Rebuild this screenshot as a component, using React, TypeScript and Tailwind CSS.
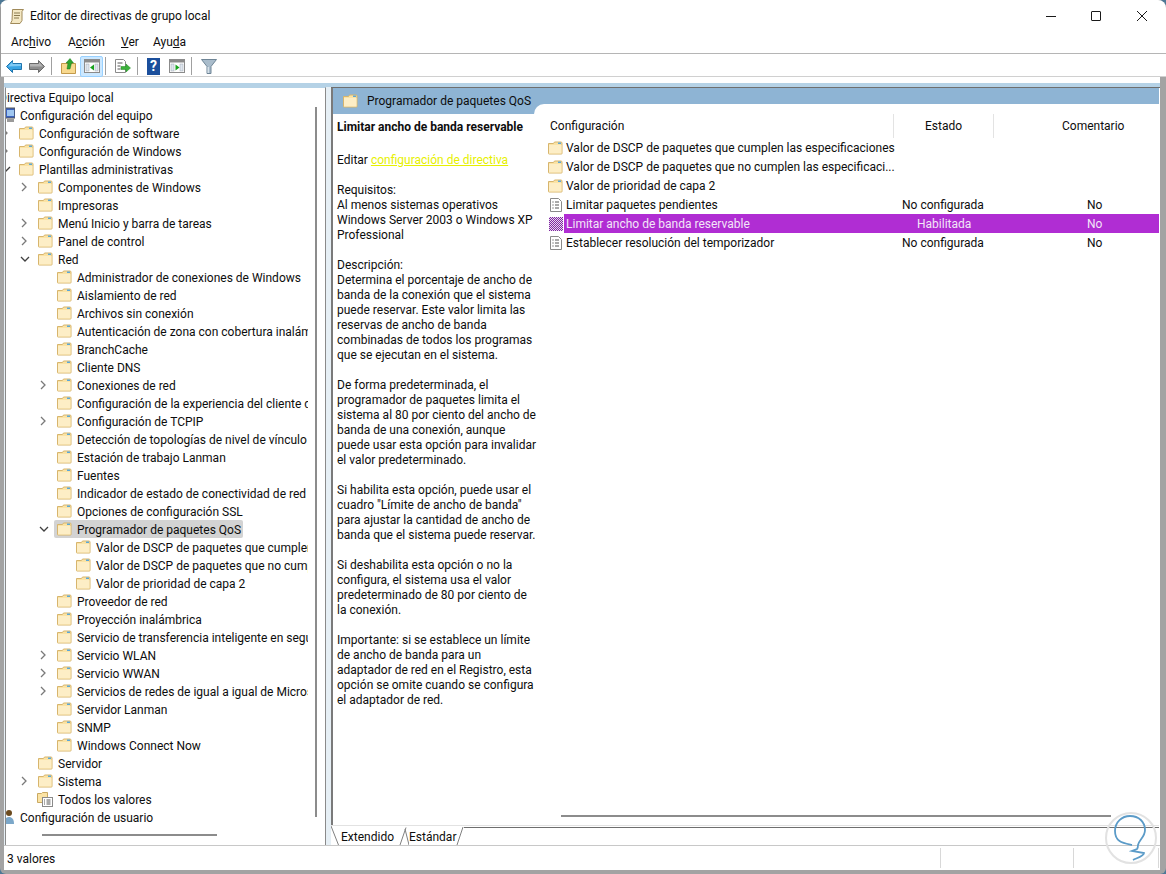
import React from "react";

const font = "[font-family:Roboto,'Liberation_Sans',sans-serif]";

const Folder = () => (
  <svg width="16" height="16" viewBox="0 0 16 16" className="shrink-0">
    <path d="M1.500 3.500h5l1-1.500h6.500a1 1 0 0 1 1 1v10.500a.5.5 0 0 1-.5.5H2a.5.5 0 0 1-.5-.5z" fill="#fbe3a4" stroke="#d7b56d" />
    <rect x="2" y="5" width="12.500" height="8.500" fill="#fdeec6" />
    <rect x="11" y="2.500" width="3" height="1.500" fill="#5aa7d8" />
  </svg>
);

const PolicyIcon = ({ active }: { active?: boolean }) => (
  <svg width="14" height="16" viewBox="0 0 14 16" className="shrink-0">
    <defs>
      <pattern id="dither" width="2" height="2" patternUnits="userSpaceOnUse">
        <rect width="2" height="2" fill="#e9d4f2" />
        <rect width="1" height="1" fill="#7d2a9e" />
        <rect x="1" y="1" width="1" height="1" fill="#7d2a9e" />
      </pattern>
    </defs>
    <path d="M1.500 1.500h8l3 3v10h-11z" fill="#fff" stroke="#8a8a8a" />
    <path d="M3.500 5h1M3.500 8h1M3.500 11h1" stroke="#333" />
    <path d="M6 5h4M6 8h4M6 11h4" stroke="#555" />
    {active && <rect x="0" y="1" width="14" height="14" fill="url(#dither)" />}
  </svg>
);

const WindowIcon = ({ play }: { play?: boolean }) => (
  <svg width="16" height="14" viewBox="0 0 16 14" className="shrink-0">
    <rect x="0.500" y="0.500" width="15" height="13" fill="#fff" stroke="#8b8b8b" />
    <rect x="1" y="1" width="14" height="2.500" fill="#8b8b8b" />
    <rect x="2" y="5" width="3" height="7" fill="#dfe6ee" stroke="#9aa5b1" strokeWidth="0.500" />
    <rect x="11" y="5" width="3" height="7" fill="#dfe6ee" stroke="#9aa5b1" strokeWidth="0.500" />
    <path d={play ? "M6.500 5.500l4 3-4 3z" : "M10 5.500l-4 3 4 3z"} fill="#19a31e" />
  </svg>
);

const Sep = ({ className }: { className: string }) => <div className={`h-[18px] w-px bg-[#a0a0a0] ${className}`} />;

const Toolbar = () => (
  <div className="flex h-[22px] items-center bg-white pl-[5px] pt-[2px]">
    <svg width="16" height="13" viewBox="0 0 16 13" className="shrink-0">
      <path d="M6.500.5L.5 6.500l6 6V9.500h9v-6h-9z" fill="#38a3e3" stroke="#1f74ad" />
      <path d="M2 6.500l4.500-4.500v2h8.500v2z" fill="#7fcaf5" />
    </svg>
    <svg width="16" height="13" viewBox="0 0 16 13" className="ml-[7px] shrink-0">
      <path d="M9.500.5l6 6-6 6V9.500H.5v-6h9z" fill="#8d8d8d" stroke="#6b6b6b" />
      <path d="M1 4h9V2l4 4.500H1z" fill="#b5b5b5" />
    </svg>
    <Sep className="ml-[6px]" />
    <svg width="15" height="16" viewBox="0 0 15 16" className="ml-[9px] shrink-0">
      <path d="M.5 5.500h14v10H.5z" fill="#f8d98f" stroke="#c39a4b" />
      <path d="M6 11l1-6H5l4-4.500L12.500 5h-2L9 11z" fill="#2fa52f" stroke="#1c7a1c" strokeWidth="0.500" />
    </svg>
    <div className="ml-[4px] flex h-[21px] w-[23px] shrink-0 items-center justify-center rounded-[2px] border border-[#99d1ff] bg-[#cce8ff]">
      <WindowIcon />
    </div>
    <Sep className="ml-[2px]" />
    <svg width="17" height="16" viewBox="0 0 17 16" className="ml-[8px] shrink-0">
      <path d="M1.500 1.500h8l2 2v11h-10z" fill="#fff" stroke="#8a8a8a" />
      <path d="M3.500 5h5M3.500 8h3M3.500 11h3" stroke="#555" />
      <path d="M7 8.500h5V6l4.500 4-4.500 4v-2.500H7z" fill="#3cb23c" stroke="#1f8a1f" strokeWidth="0.500" />
    </svg>
    <Sep className="ml-[6px]" />
    <div className="ml-[9px] flex h-[17px] w-[13px] shrink-0 items-center justify-center bg-[#1b4f9c] text-[14px] font-bold leading-none text-white">?</div>
    <div className="ml-[9px]">
      <WindowIcon play />
    </div>
    <Sep className="ml-[6px]" />
    <svg width="16" height="15" viewBox="0 0 16 15" className="ml-[9px] shrink-0">
      <path d="M.5.500h15l-5.500 7v7h-4v-7z" fill="#a9bccb" stroke="#6f8596" />
      <path d="M6.500 8h1.500v6H6.500z" fill="#d6e0e8" />
    </svg>
  </div>
);

type Row = { level: number; text: string; chev?: "closed" | "open"; icon?: "folder" | "pc" | "user" | "all" | "none"; selected?: boolean };

const rows: Row[] = [
  { level: 0, text: "Directiva Equipo local", icon: "none" },
  { level: 0, text: "Configuración del equipo", icon: "pc" },
  { level: 1, text: "Configuración de software", chev: "closed" },
  { level: 1, text: "Configuración de Windows", chev: "closed" },
  { level: 1, text: "Plantillas administrativas", chev: "open" },
  { level: 2, text: "Componentes de Windows", chev: "closed" },
  { level: 2, text: "Impresoras" },
  { level: 2, text: "Menú Inicio y barra de tareas", chev: "closed" },
  { level: 2, text: "Panel de control", chev: "closed" },
  { level: 2, text: "Red", chev: "open" },
  { level: 3, text: "Administrador de conexiones de Windows" },
  { level: 3, text: "Aislamiento de red" },
  { level: 3, text: "Archivos sin conexión" },
  { level: 3, text: "Autenticación de zona con cobertura inalámbrica" },
  { level: 3, text: "BranchCache" },
  { level: 3, text: "Cliente DNS" },
  { level: 3, text: "Conexiones de red", chev: "closed" },
  { level: 3, text: "Configuración de la experiencia del cliente de" },
  { level: 3, text: "Configuración de TCPIP", chev: "closed" },
  { level: 3, text: "Detección de topologías de nivel de vínculo" },
  { level: 3, text: "Estación de trabajo Lanman" },
  { level: 3, text: "Fuentes" },
  { level: 3, text: "Indicador de estado de conectividad de red" },
  { level: 3, text: "Opciones de configuración SSL" },
  { level: 3, text: "Programador de paquetes QoS", chev: "open", selected: true },
  { level: 4, text: "Valor de DSCP de paquetes que cumplen las" },
  { level: 4, text: "Valor de DSCP de paquetes que no cumplen" },
  { level: 4, text: "Valor de prioridad de capa 2" },
  { level: 3, text: "Proveedor de red" },
  { level: 3, text: "Proyección inalámbrica" },
  { level: 3, text: "Servicio de transferencia inteligente en segundo" },
  { level: 3, text: "Servicio WLAN", chev: "closed" },
  { level: 3, text: "Servicio WWAN", chev: "closed" },
  { level: 3, text: "Servicios de redes de igual a igual de Microsoft", chev: "closed" },
  { level: 3, text: "Servidor Lanman" },
  { level: 3, text: "SNMP" },
  { level: 3, text: "Windows Connect Now" },
  { level: 2, text: "Servidor" },
  { level: 2, text: "Sistema", chev: "closed" },
  { level: 2, text: "Todos los valores", icon: "all" },
  { level: 0, text: "Configuración de usuario", icon: "user" },
];

const indent: Record<number, string> = {
  0: "ml-[-26px]",
  1: "ml-[-7px]",
  2: "ml-[12px]",
  3: "ml-[31px]",
  4: "ml-[50px]",
};

const Chevron = ({ kind }: { kind?: "closed" | "open" }) => (
  <div className="flex w-[17px] shrink-0 items-center pl-[2px]">
    {kind === "closed" && (
      <svg width="8" height="10" viewBox="0 0 8 10">
        <path d="M2 1l4 4-4 4" fill="none" stroke="#7a7a7a" strokeWidth="1.300" />
      </svg>
    )}
    {kind === "open" && (
      <svg width="10" height="8" viewBox="0 0 10 8">
        <path d="M1 2l4 4 4-4" fill="none" stroke="#404040" strokeWidth="1.300" />
      </svg>
    )}
  </div>
);

const TreeIcon = ({ icon }: { icon?: Row["icon"] }) => {
  if (icon === "pc")
    return (
      <svg width="16" height="16" viewBox="0 0 16 16" className="shrink-0">
        <rect x="6" y="1" width="10" height="10" fill="#3a62c0" stroke="#555" />
        <rect x="8" y="3" width="7" height="6" fill="#9fc6f0" />
        <rect x="8" y="12" width="7" height="3" fill="#9a9a9a" />
      </svg>
    );
  if (icon === "user")
    return (
      <svg width="16" height="16" viewBox="0 0 16 16" className="shrink-0">
        <circle cx="10" cy="4" r="3" fill="#6b4a1e" />
        <path d="M5 15c0-5 2-7 5-7s5 2 5 7z" fill="#7ba7c9" />
      </svg>
    );
  if (icon === "all")
    return (
      <svg width="16" height="16" viewBox="0 0 16 16" className="shrink-0">
        <path d="M.5 2.500h4l1-1h5v10h-10z" fill="#fbe3a4" stroke="#c9a962" />
        <rect x="5.500" y="6.500" width="10" height="9" fill="#fff" stroke="#8a8a8a" />
        <path d="M7 9h1M7 11h1M7 13h1M9.500 9h4M9.500 11h4M9.500 13h4" stroke="#555" />
      </svg>
    );
  if (icon === "none") return null;
  return <Folder />;
};

const Tree = () => (
  <div className="relative flex min-w-0 flex-1 flex-col overflow-hidden">
    <div className="w-[302px] overflow-hidden">
      {rows.map((r) => (
        <div key={r.text} className="flex h-[18px] items-center whitespace-nowrap">
          <div className={`flex h-full items-center ${indent[r.level]}`}>
            <Chevron kind={r.chev} />
            <div className={`flex h-[18px] items-center rounded-[2px] px-[2px] ${r.selected ? "bg-[#d3d3d3]" : ""}`}>
              <TreeIcon icon={r.icon} />
              <span className={`mt-[2px] ${r.icon === "none" ? "" : "ml-[5px]"}`}>{r.text}</span>
            </div>
          </div>
        </div>
      ))}
    </div>
    <div className="absolute bottom-[9px] left-[36px] h-[2px] w-[175px] bg-[#8c8c8c]" />
    <div className="absolute right-[8px] top-[19px] h-[710px] w-[2px] bg-[#8c8c8c]" />
  </div>
);

const paragraphs = [
  ["Requisitos:", "Al menos sistemas operativos", "Windows Server 2003 o Windows XP", "Professional"],
  [
    "Descripción:",
    "Determina el porcentaje de ancho de",
    "banda de la conexión que el sistema",
    "puede reservar. Este valor limita las",
    "reservas de ancho de banda",
    "combinadas de todos los programas",
    "que se ejecutan en el sistema.",
  ],
  [
    "De forma predeterminada, el",
    "programador de paquetes limita el",
    "sistema al 80 por ciento del ancho de",
    "banda de una conexión, aunque",
    "puede usar esta opción para invalidar",
    "el valor predeterminado.",
  ],
  [
    "Si habilita esta opción, puede usar el",
    'cuadro "Límite de ancho de banda"',
    "para ajustar la cantidad de ancho de",
    "banda que el sistema puede reservar.",
  ],
  [
    "Si deshabilita esta opción o no la",
    "configura, el sistema usa el valor",
    "predeterminado de 80 por ciento de",
    "la conexión.",
  ],
  [
    "Importante: si se establece un límite",
    "de ancho de banda para un",
    "adaptador de red en el Registro, esta",
    "opción se omite cuando se configura",
    "el adaptador de red.",
  ],
];

const Description = () => (
  <div className="relative z-20 w-[201px] shrink-0 pl-[4px] pt-[6px] leading-[15px]">
    <p className="whitespace-nowrap font-bold">Limitar ancho de banda reservable</p>
    <p className="mt-[18px]">
      Editar <span className="text-[#e6f000] underline">configuración de directiva</span>
    </p>
    <div className="mt-[15px] flex flex-col gap-[15px]">
      {paragraphs.map((p) => (
        <div key={p[0]}>
          {p.map((l) => (
            <p key={l} className="whitespace-nowrap">
              {l}
            </p>
          ))}
        </div>
      ))}
    </div>
  </div>
);

const settings = [
  { text: "Valor de DSCP de paquetes que cumplen las especificaciones", kind: "folder" },
  { text: "Valor de DSCP de paquetes que no cumplen las especificaci...", kind: "folder" },
  { text: "Valor de prioridad de capa 2", kind: "folder" },
  { text: "Limitar paquetes pendientes", kind: "policy", state: "No configurada", note: "No" },
  { text: "Limitar ancho de banda reservable", kind: "active", state: "Habilitada", note: "No" },
  { text: "Establecer resolución del temporizador", kind: "policy", state: "No configurada", note: "No" },
];

const SettingsList = () => (
  <div className="relative z-10 -mt-[10px] flex min-w-0 flex-1 flex-col rounded-tl-[10px] bg-white">
    <div className="ml-[12px] mt-[10px] flex h-[24px] items-center">
      <div className="w-[347px] pl-[4px]">Configuración</div>
      <div className="h-[24px] w-px bg-[#e3e3e3]" />
      <div className="w-[99px] text-center">Estado</div>
      <div className="h-[24px] w-px bg-[#e3e3e3]" />
      <div className="pl-[68px]">Comentario</div>
    </div>
    <div className="pl-[11px]">
      {settings.map((s) => {
        const on = s.kind === "active";
        return (
          <div key={s.text} className="flex h-[19px] items-center">
            <div className="flex w-[19px] shrink-0 justify-end pr-[1px]">
              {s.kind === "folder" ? <Folder /> : <PolicyIcon active={on} />}
            </div>
            <div className={`flex h-[19px] flex-1 items-center pl-[2px] ${on ? "bg-[#b02dd3] text-[#f3e6f8]" : ""}`}>
              <span className="w-[336px] shrink-0 whitespace-nowrap">{s.text}</span>
              {s.state && <span className={`shrink-0 whitespace-nowrap ${on ? "ml-[15px] w-[170px]" : "w-[185px]"}`}>{s.state}</span>}
              {s.note && <span>{s.note}</span>}
            </div>
          </div>
        );
      })}
    </div>
    <div className="mb-[8px] ml-[27px] mt-auto h-[2px] w-[550px] bg-[#8c8c8c]" />
  </div>
);

const Tabs = () => (
  <div className="flex h-[20px] border-t border-[#e2e2e2] bg-white">
    <svg width="10" height="19" viewBox="0 0 10 19" className="shrink-0">
      <path d="M0 0l7.500 19" stroke="#808080" />
    </svg>
    <span className="mt-[3px] w-[54px] shrink-0 self-center">Extendido</span>
    <svg width="14" height="19" viewBox="0 0 14 19" className="shrink-0">
      <path d="M5 19L11 1.500" stroke="#808080" />
      <path d="M10 3l4 16" stroke="#808080" />
    </svg>
    <span className="mt-[3px] w-[46px] shrink-0 self-center">Estándar</span>
    <svg width="9" height="19" viewBox="0 0 9 19" className="shrink-0">
      <path d="M2 19L8 1" stroke="#808080" />
    </svg>
    <div className="mt-[1px] flex-1 border-t border-[#6e6e6e]" />
  </div>
);

const Watermark = () => (
  <div className="absolute left-[1105px] top-[812px] z-20 h-[52px] w-[52px] rounded-full border-[2px] border-[#e2e2e2]">
    <svg width="48" height="48" viewBox="0 0 48 48" fill="none">
      <path
        d="M25 31C16 29 8 28 8 17 8 8 15 2 23 2 32 2 38 8 38 16 38 23 32 26 31 31 31 33 31 34 30 35L25 37 37 39C37 42 30 44 26 46"
        stroke="#5b9bc8"
        strokeWidth="1.800"
      />
    </svg>
  </div>
);

export default function App() {
  return (
    <div className={`relative h-[874px] w-[1166px] overflow-hidden bg-[#4d7896] text-[12px] text-[#0d0d0d] ${font}`}>
      <div className="flex h-[874px] flex-col overflow-hidden rounded-t-[8px] rounded-b-[6px] bg-[#a3a3a3]">
        <div className="border-l border-[#9a9a9a] bg-white">
          <div className="flex h-[32px] items-center">
            <svg width="16" height="17" viewBox="0 0 16 17" className="ml-[8px] shrink-0">
              <path d="M3.500 1.500h11l-1.500 2v9l-2 3H1.500l1.500-3z" fill="#f4e8c4" stroke="#a08a5a" />
              <path d="M5 5h6M5 7.500h6M5 10h5" stroke="#8a7a50" />
            </svg>
            <span className="ml-[5px]">Editor de directivas de grupo local</span>
            <div className="ml-auto flex items-center">
              <div className="h-px w-[10px] bg-[#1a1a1a]" />
              <div className="ml-[35px] h-[10px] w-[10px] rounded-[1px] border border-[#1a1a1a]" />
              <svg width="10" height="10" viewBox="0 0 10 10" className="ml-[36px] mr-[19px]">
                <path d="M0 0l10 10M10 0L0 10" stroke="#1a1a1a" />
              </svg>
            </div>
          </div>
          <div className="flex h-[22px] items-center border-b border-[#b5b5b5] pb-[2px] pl-[10px]">
            <span className="w-[57px]">Arc<u>h</u>ivo</span>
            <span className="w-[53px]">A<u>c</u>ción</span>
            <span className="w-[32px]"><u>V</u>er</span>
            <span>Ayu<u>d</u>a</span>
          </div>
          <Toolbar />
          <div className="border-t border-[#d0d0d0]" />
        </div>
        <div className="ml-[4px] mr-[6px] mb-[4px] flex min-h-0 flex-1 flex-col bg-white">
          <div className="h-[6px] shrink-0" />
          <div className="h-[4px] shrink-0 bg-[#b5d2e6]" />
          <div className="flex min-h-0 flex-1 bg-[#e6eff5]">
            <div className="ml-[1px] flex w-[321px] shrink-0 border-x border-t border-x-[#8a8a8a] border-t-[#b5d2e6] bg-white">
              <Tree />
            </div>
            <div className="ml-[5px] flex min-w-0 flex-1 flex-col border-t border-[#6e6e6e] bg-white pr-[1px]">
              <div className="flex min-h-0 flex-1 flex-col border-l-[2px] border-[#7a7a7a]">
                <div className="flex h-[26px] shrink-0 items-center bg-[#8eb4d4] pl-[9px]">
                  <Folder />
                  <span className="ml-[9px]">Programador de paquetes QoS</span>
                </div>
                <div className="flex min-h-0 flex-1">
                  <Description />
                  <SettingsList />
                </div>
              </div>
              <Tabs />
            </div>
          </div>
          <div className="flex h-[25px] shrink-0 items-center border-t border-[#c8c8c8] bg-white pl-[3px]">
            <span className="mt-[2px]">3 valores</span>
            <div className="ml-auto flex h-full py-[2px]">
              <div className="w-[133px] border-l border-[#d8d8d8]" />
              <div className="w-[85px] border-l border-[#d8d8d8]" />
              <div className="w-[2px] border-l border-[#d8d8d8]" />
            </div>
          </div>
        </div>
      </div>
      <Watermark />
    </div>
  );
}
